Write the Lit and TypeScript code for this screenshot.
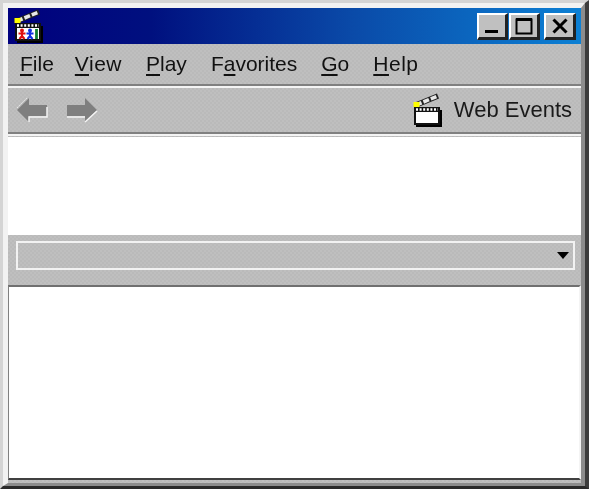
import { LitElement, html, css, svg } from 'lit';
import { customElement } from 'lit/decorators.js';

const menus = [
  ['F', 'ile'],
  ['V', 'iew'],
  ['P', 'lay'],
  ['F', 'a', 'vorites'],
  ['G', 'o'],
  ['H', 'elp'],
];

// clapper stick + board, shared by the title bar and toolbar icons
const clapper = (figures: boolean) => svg`
  <path d="M4 13 L26 4" stroke="#222" stroke-width="5.5" fill="none"/>
  <path d="M4 13 L26 4" stroke="#e8e8e8" stroke-width="3.6" stroke-dasharray="6 2" fill="none"/>
  <rect x="1.5" y="10" width="6" height="5" fill="#ff0"/>
  <rect x="4" y="18" width="26" height="17" fill="#000"/>
  <rect x="2" y="15" width="26" height="18" fill="#111"/>
  <rect x="4" y="20" width="22" height="11" fill="#fff"/>
  <path d="M4 17.5 H26" stroke="#fff" stroke-width="2.4" stroke-dasharray="2 1.6"/>
  ${figures
    ? svg`
      <circle cx="9" cy="22.5" r="2" fill="#e01010"/>
      <path d="M5.5 25.5 H12.5 M9 24 V28 M6.5 31 L9 28 L11.5 31" stroke="#e01010" stroke-width="2.2" fill="none"/>
      <circle cx="17" cy="22.5" r="2" fill="#1030e0"/>
      <path d="M13.5 25.5 H20.5 M17 24 V28 M14.5 31 L17 28 L19.5 31" stroke="#1030e0" stroke-width="2.2" fill="none"/>
      <path d="M23.5 21 V31" stroke="#108030" stroke-width="2.8" fill="none"/>`
    : ''}
`;

@customElement('app-root')
export class AppRoot extends LitElement {
  static styles = css`
    :host {
      display: block;
      width: 589px;
      height: 489px;
      overflow: hidden;
      font-family: "Liberation Sans", Arial, sans-serif;
    }
    .frame {
      box-sizing: border-box;
      width: 589px;
      height: 489px;
      border-style: solid;
      border-width: 3px 4px 3px 3px;
      border-color: #d4d4d4 #3c3c3c #2a2a2a #d4d4d4;
      background: #bdbdbd;
    }
    .inner {
      box-sizing: border-box;
      height: 100%;
      display: flex;
      flex-direction: column;
      border-style: solid;
      border-width: 5px 4px 3px 5px;
      border-color: #f2f2f2 #8c8c8c #8c8c8c #f2f2f2;
      filter: blur(0.6px);
      background-color: #bdbdbd;
      background-image: conic-gradient(#bfbfbf 25%, #bababa 0 50%, #bfbfbf 0 75%, #bababa 0);
      background-size: 4px 4px;
    }
    .title {
      height: 36px;
      flex: none;
      display: flex;
      align-items: center;
      justify-content: space-between;
      padding: 0 5px 0 5px;
      background: linear-gradient(90deg, #00007e 0%, #00107f 25%, #0a4aa8 60%, #0c80d4 100%);
    }
    .title svg {
      display: block;
    }
    .buttons {
      display: flex;
    }
    .btn {
      box-sizing: border-box;
      width: 31px;
      height: 27px;
      background: #c0c0c0;
      border-style: solid;
      border-width: 2px 3px 3px 2px;
      border-color: #fff #222 #222 #fff;
      display: flex;
      align-items: center;
      justify-content: center;
    }
    .btn + .btn {
      margin-left: 1px;
    }
    .btn.close {
      margin-left: 4px;
      width: 32px;
    }
    .menu {
      height: 40px;
      flex: none;
      display: flex;
      align-items: center;
      gap: 24px;
      padding: 0 12px;
      font-size: 21px;
      color: #111;
    }
    .menu span:first-child {
      margin-right: -3px;
    }
    .menu span:nth-child(2) {
      letter-spacing: 0.5px;
    }
    .menu span:last-child {
      letter-spacing: 0.5px;
    }
    .menu u {
      text-underline-offset: 3px;
    }
    .rule {
      flex: none;
      height: 2px;
      background: #808080;
      border-bottom: 2px solid #f4f4f4;
    }
    .toolbar {
      height: 44px;
      flex: none;
      display: flex;
      align-items: center;
      padding: 0 9px 0 8px;
    }
    .arrow {
      display: block;
      margin-right: 18px;
    }
    .events {
      margin-left: auto;
      display: flex;
      align-items: center;
      gap: 12px;
      font-size: 22px;
      color: #1a1a1a;
    }
    .top-pane {
      flex: none;
      height: 98px;
      margin-top: 1px;
      background: #fff;
    }
    .combo-row {
      flex: none;
      height: 50px;
      box-sizing: border-box;
      padding: 6px 6px 15px 8px;
    }
    .combo {
      box-sizing: border-box;
      height: 100%;
      border: 2px solid #f2f2f2;
      display: flex;
      align-items: center;
      justify-content: flex-end;
      padding-right: 3px;
    }
    .bottom-pane {
      flex: 1;
      background: #fff;
      border-style: solid;
      border-width: 2px 2px 2px 1px;
      border-color: #707070 #f4f4f4 #404040 #808080;
      margin-bottom: 3px;
    }
  `;

  render() {
    return html`
      <div class="frame">
        <div class="inner">
          <div class="title">
            <svg width="30" height="36" viewBox="0 0 30 36">${clapper(true)}</svg>
            <div class="buttons">
              <div class="btn">
                <svg width="20" height="18" viewBox="0 0 20 18"><rect x="3" y="13" width="13" height="3" fill="#000"/></svg>
              </div>
              <div class="btn">
                <svg width="20" height="20" viewBox="0 0 20 20"><path d="M2.5 3.5 H17.5 V17.5 H2.5 Z" fill="none" stroke="#000" stroke-width="2"/><rect x="2" y="2" width="16" height="3" fill="#000"/></svg>
              </div>
              <div class="btn close">
                <svg width="20" height="18" viewBox="0 0 20 18"><path d="M3.5 2.5 L16.5 15.5 M16.5 2.5 L3.5 15.5" stroke="#000" stroke-width="3"/></svg>
              </div>
            </div>
          </div>
          <div class="menu">
            ${menus.map(
              (m) => html`<span>${m.length === 3
                ? html`F<u>${m[1]}</u>${m[2]}`
                : html`<u>${m[0]}</u>${m[1]}`}</span>`
            )}
          </div>
          <div class="rule"></div>
          <div class="toolbar">
            <svg class="arrow" width="32" height="26" viewBox="0 0 32 26">
              <path d="M1 13 L13 1 V8 H31 V19 H13 V25 Z" fill="#7f7f7f"/>
              <path d="M13 25 V20 H31 V10" fill="none" stroke="#f4f4f4" stroke-width="1.5"/>
              <path d="M1 11 L11 1" fill="none" stroke="#e8e8e8" stroke-width="1" stroke-dasharray="2 1"/>
            </svg>
            <svg class="arrow" width="32" height="26" viewBox="0 0 32 26">
              <path d="M31 13 L19 1 V8 H1 V19 H19 V25 Z" fill="#7f7f7f"/>
              <path d="M1 20 H19 M19 25 L31 14" fill="none" stroke="#f4f4f4" stroke-width="1.5"/>
            </svg>
            <div class="events">
              <svg width="30" height="36" viewBox="0 0 30 36">${clapper(false)}</svg>
              <span>Web Events</span>
            </div>
          </div>
          <div class="rule"></div>
          <div class="top-pane"></div>
          <div class="combo-row">
            <div class="combo">
              <svg width="14" height="9" viewBox="0 0 14 9"><path d="M1 1 H13 L7 8 Z" fill="#000"/></svg>
            </div>
          </div>
          <div class="bottom-pane"></div>
        </div>
      </div>
    `;
  }
}
